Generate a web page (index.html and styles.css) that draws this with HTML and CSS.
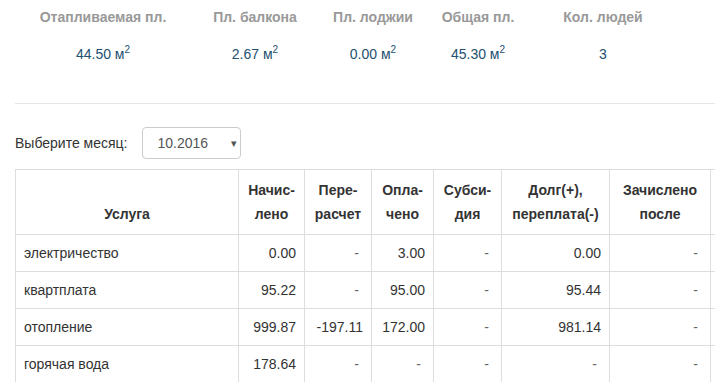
FILE: index.html
```html
<!DOCTYPE html>
<html lang="ru">
<head>
<meta charset="utf-8">
<title>Лицевой счёт</title>
<link rel="stylesheet" href="styles.css">
</head>
<body>
<div class="page">
  <div class="summary">
    <div class="s-label">Отапливаемая пл.</div>
    <div class="s-label">Пл. балкона</div>
    <div class="s-label">Пл. лоджии</div>
    <div class="s-label">Общая пл.</div>
    <div class="s-label">Кол. людей</div>
    <div class="s-value">44.50 м<sup>2</sup></div>
    <div class="s-value">2.67 м<sup>2</sup></div>
    <div class="s-value">0.00 м<sup>2</sup></div>
    <div class="s-value">45.30 м<sup>2</sup></div>
    <div class="s-value">3</div>
  </div>

  <hr class="divider">

  <div class="month-row">
    <span class="month-label">Выберите месяц:</span>
    <div class="select">
      <span class="select-value">10.2016</span>
      <span class="select-arrow">&#9662;</span>
    </div>
  </div>

  <div class="table-wrap">
    <table class="services">
      <colgroup>
        <col class="c-name">
        <col class="c-num">
        <col class="c-num2">
        <col class="c-num3">
        <col class="c-num4">
        <col class="c-debt">
        <col class="c-after">
        <col class="c-extra">
      </colgroup>
      <thead>
        <tr>
          <th>Услуга</th>
          <th>Начис-<br>лено</th>
          <th>Пере-<br>расчет</th>
          <th>Опла-<br>чено</th>
          <th>Субси-<br>дия</th>
          <th>Долг(+),<br>переплата(-)</th>
          <th>Зачислено<br>после</th>
          <th></th>
        </tr>
      </thead>
      <tbody>
        <tr>
          <td class="name">электричество</td>
          <td>0.00</td>
          <td><span class="dash">-</span></td>
          <td>3.00</td>
          <td><span class="dash">-</span></td>
          <td>0.00</td>
          <td><span class="dash">-</span></td>
          <td></td>
        </tr>
        <tr>
          <td class="name">квартплата</td>
          <td>95.22</td>
          <td><span class="dash">-</span></td>
          <td>95.00</td>
          <td><span class="dash">-</span></td>
          <td>95.44</td>
          <td><span class="dash">-</span></td>
          <td></td>
        </tr>
        <tr>
          <td class="name">отопление</td>
          <td>999.87</td>
          <td>-197.11</td>
          <td>172.00</td>
          <td><span class="dash">-</span></td>
          <td>981.14</td>
          <td><span class="dash">-</span></td>
          <td></td>
        </tr>
        <tr>
          <td class="name">горячая вода</td>
          <td>178.64</td>
          <td><span class="dash">-</span></td>
          <td><span class="dash">-</span></td>
          <td><span class="dash">-</span></td>
          <td><span class="dash">-</span></td>
          <td><span class="dash">-</span></td>
          <td></td>
        </tr>
      </tbody>
    </table>
  </div>
</div>
</body>
</html>
```

FILE: styles.css
```css
html, body {
  margin: 0;
  padding: 0;
  background: #fff;
  overflow: hidden;
}

body {
  font-family: "Liberation Sans", Arial, sans-serif;
  font-size: 14px;
  line-height: 20px;
  color: #333;
}

.page {
  padding-left: 15px;
}

.summary {
  display: grid;
  grid-template-columns: 164px 140px 96px 114px 136px;
  grid-auto-rows: 20px;
  row-gap: 17px;
  margin-left: 6px;
  padding-top: 7px;
}

.s-label {
  font-weight: bold;
  color: #999;
  text-align: center;
  white-space: nowrap;
}

.s-value {
  color: #23506f;
  text-align: center;
  white-space: nowrap;
}

.s-value sup {
  font-size: 10px;
  line-height: 0;
  vertical-align: 6px;
}

.divider {
  border: 0;
  border-top: 1px solid #e6e6e6;
  margin: 39px 0 0;
  height: 0;
}

.month-row {
  display: flex;
  align-items: center;
  margin-top: 23px;
  height: 32px;
}

.month-label {
  margin-right: 14px;
}

.select {
  box-sizing: border-box;
  width: 99px;
  height: 32px;
  border: 1px solid #ccc;
  border-radius: 4px;
  display: flex;
  align-items: center;
  padding-left: 15px;
  padding-right: 3px;
  color: #555;
}

.select-value {
  flex: 1;
}

.select-arrow {
  font-size: 11px;
  color: #555;
}

.table-wrap {
  margin-top: 10px;
  overflow: hidden;
}

.services {
  border-collapse: collapse;
  table-layout: fixed;
  width: 795px;
}

.c-name { width: 223px; }
.c-num { width: 66px; }
.c-num2 { width: 67px; }
.c-num3 { width: 62px; }
.c-num4 { width: 68px; }
.c-debt { width: 108px; }
.c-after { width: 101px; }
.c-extra { width: 100px; }

.services th,
.services td {
  border: 1px solid #ddd;
  padding: 8px;
}

.services th {
  font-weight: bold;
  text-align: center;
  vertical-align: bottom;
  line-height: 24px;
  white-space: nowrap;
}

.services td {
  text-align: right;
  line-height: 20px;
  white-space: nowrap;
}

.services td.name {
  text-align: left;
}

.dash {
  color: #666;
  margin-right: 4px;
}
```
